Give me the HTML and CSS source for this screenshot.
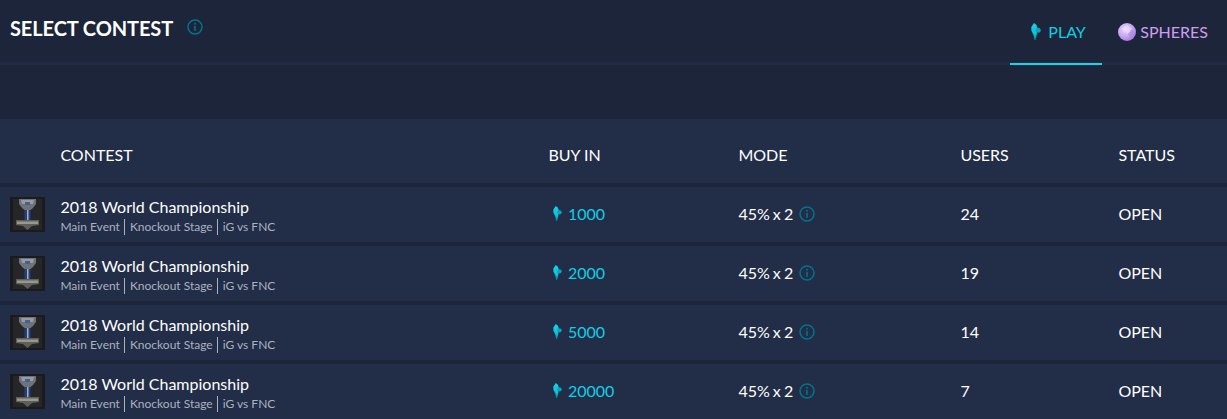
FILE: index.html
```html
<!DOCTYPE html>
<html>
    <head>
        <title>Select Contest</title>
        <link rel="stylesheet" href="styles.css">
    </head>
    <body>
        <svg class="defs" width="0" height="0">
            <defs>
                <linearGradient id="shardFill" x1="0" y1="0" x2="0" y2="1">
                    <stop offset="0" stop-color="#14d4ec" />
                    <stop offset="0.65" stop-color="#0cc0d8" />
                    <stop offset="1" stop-color="#067f94" />
                </linearGradient>
            </defs>
            <symbol id="shard" viewBox="0 0 10 17">
                <path d="M3 0 L5.5 2 L6.5 5 L5.5 6 L6 10 L5.5 13 L4.5 17 L3.5 17 L2.5 12 L0.3 7.5 L0.3 4 Z" fill="url(#shardFill)" />
                <circle cx="7.2" cy="7.2" r="2.5" fill="#0ba4bc" />
            </symbol>
            <symbol id="info" viewBox="0 0 16 16">
                <circle cx="8" cy="8" r="7" fill="none" stroke="currentColor" stroke-width="1.5" />
                <rect x="7.2" y="6.8" width="1.6" height="5" fill="currentColor" />
                <rect x="7.2" y="3.8" width="1.6" height="1.8" fill="currentColor" />
            </symbol>
            <symbol id="trophy" viewBox="0 0 35 35">
                <rect width="35" height="35" fill="#1b1b1d" />
                <rect x="3" y="2" width="29" height="31" fill="#262628" />
                <path d="M9 2 L26 2 L26 7 L23 11 L20.5 13 L14.5 13 L12 11 L9 7 Z" fill="#6f7277" />
                <path d="M11 3 L24 3 L23 7 L12 7 Z" fill="#989ba0" />
                <rect x="15" y="5" width="5" height="3" fill="#40619c" />
                <rect x="14.5" y="13" width="6" height="10" fill="#21407f" />
                <rect x="17" y="13" width="1.5" height="10" fill="#a9adb4" />
                <path d="M6 23 L29 23 L29 28 L22 29 L17.5 33 L13 29 L6 28 Z" fill="#5f5f5a" />
                <rect x="7" y="24.5" width="21" height="2.5" fill="#98988f" />
            </symbol>
        </svg>

        <div class="topBar">
            <div class="titleWrap">
                <h1 class="title">SELECT CONTEST</h1>
                <svg class="icon infoIcon titleInfo"><use href="#info" /></svg>
            </div>
            <div class="tabs">
                <div class="tab play active">
                    <svg class="shard"><use href="#shard" /></svg>
                    <span>PLAY</span>
                </div>
                <div class="tab spheres">
                    <svg class="sphere" viewBox="0 0 18 18">
                        <defs>
                            <radialGradient id="sphereFill" cx="40%" cy="35%" r="70%">
                                <stop offset="0" stop-color="#e8d8fb" />
                                <stop offset="0.6" stop-color="#c7a4f2" />
                                <stop offset="1" stop-color="#a478e0" />
                            </radialGradient>
                        </defs>
                        <circle cx="9" cy="9" r="9" fill="url(#sphereFill)" />
                        <path d="M3 6 L9 2 L14 6 L10 11 Z" fill="#efe4fc" opacity="0.6" />
                        <path d="M10 11 L14 6 L17 10 L13 16 Z" fill="#a87de2" opacity="0.5" />
                    </svg>
                    <span>SPHERES</span>
                </div>
            </div>
        </div>

        <div class="contests">
            <div class="row headRow">
                <div></div>
                <div>CONTEST</div>
                <div>BUY IN</div>
                <div>MODE</div>
                <div>USERS</div>
                <div>STATUS</div>
            </div>

            <div class="row contestRow">
                <svg class="thumb"><use href="#trophy" /></svg>
                <div class="info">
                    <div class="name">2018 World Championship</div>
                    <div class="meta"><span>Main Event</span><span>Knockout Stage</span><span>iG vs FNC</span></div>
                </div>
                <div class="value buyIn"><svg class="shard small"><use href="#shard" /></svg>1000</div>
                <div class="value mode">45% x 2 <svg class="icon infoIcon"><use href="#info" /></svg></div>
                <div class="value">24</div>
                <div class="value">OPEN</div>
            </div>

            <div class="row contestRow">
                <svg class="thumb"><use href="#trophy" /></svg>
                <div class="info">
                    <div class="name">2018 World Championship</div>
                    <div class="meta"><span>Main Event</span><span>Knockout Stage</span><span>iG vs FNC</span></div>
                </div>
                <div class="value buyIn"><svg class="shard small"><use href="#shard" /></svg>2000</div>
                <div class="value mode">45% x 2 <svg class="icon infoIcon"><use href="#info" /></svg></div>
                <div class="value">19</div>
                <div class="value">OPEN</div>
            </div>

            <div class="row contestRow">
                <svg class="thumb"><use href="#trophy" /></svg>
                <div class="info">
                    <div class="name">2018 World Championship</div>
                    <div class="meta"><span>Main Event</span><span>Knockout Stage</span><span>iG vs FNC</span></div>
                </div>
                <div class="value buyIn"><svg class="shard small"><use href="#shard" /></svg>5000</div>
                <div class="value mode">45% x 2 <svg class="icon infoIcon"><use href="#info" /></svg></div>
                <div class="value">14</div>
                <div class="value">OPEN</div>
            </div>

            <div class="row contestRow">
                <svg class="thumb"><use href="#trophy" /></svg>
                <div class="info">
                    <div class="name">2018 World Championship</div>
                    <div class="meta"><span>Main Event</span><span>Knockout Stage</span><span>iG vs FNC</span></div>
                </div>
                <div class="value buyIn"><svg class="shard small"><use href="#shard" /></svg>20000</div>
                <div class="value mode">45% x 2 <svg class="icon infoIcon"><use href="#info" /></svg></div>
                <div class="value">7</div>
                <div class="value">OPEN</div>
            </div>
        </div>
    </body>
</html>
```

FILE: styles.css
```css
html, body {
    margin: 0;
    height: 419px;
    overflow: hidden;
    background-color: #1c2539;
    font-family: Lato, "Open Sans", sans-serif;
    color: #fff;
}

.defs {
    display: block;
    height: 0;
}

.topBar {
    display: flex;
    justify-content: space-between;
    height: 62px;
    border-bottom: 3px solid #212b44;
}

.titleWrap {
    display: flex;
    align-items: flex-start;
    padding: 16px 0 0 10px;
}

.title {
    margin: 0;
    font-size: 20px;
    line-height: 24px;
    font-weight: bold;
    letter-spacing: -0.1px;
}

.icon {
    width: 16px;
    height: 16px;
}

.infoIcon {
    color: #05728a;
}

.titleInfo {
    margin: 3px 0 0 14px;
}

.tabs {
    display: flex;
    padding-right: 19px;
}

.tab {
    display: flex;
    align-items: center;
    box-sizing: border-box;
    height: 65px;
    font-size: 16px;
    padding-bottom: 2px;
}

.play {
    width: 92px;
    padding-left: 21px;
    color: #13cde6;
}

.active {
    border-bottom: 2px solid #13d6ec;
    padding-bottom: 0;
}

.spheres {
    margin-left: 16px;
    color: #cf9df0;
}

.shard {
    width: 10px;
    height: 17px;
    margin-right: 7px;
}

.shard.small {
    width: 9px;
    height: 15px;
    margin-right: 6px;
}

.sphere {
    width: 18px;
    height: 18px;
    margin-right: 4px;
}

.contests {
    margin-top: 54px;
}

.row {
    display: grid;
    grid-template-columns: 60.4px 488px 190px 222px 158px 1fr;
    align-items: center;
    background-color: #222d47;
    font-size: 16px;
}

.headRow {
    box-sizing: border-box;
    height: 64px;
    padding-top: 7px;
}

.contestRow {
    height: 55px;
    margin-top: 4px;
}

.thumb {
    width: 35px;
    height: 35px;
    margin-left: 10px;
}

.info {
    padding-top: 3px;
}

.name {
    line-height: 20px;
}

.meta {
    display: flex;
    margin-top: 2px;
    font-size: 12px;
    line-height: 16px;
    color: #aab2c0;
}

.meta span + span {
    margin-left: 4px;
    padding-left: 5px;
    border-left: 1px solid #aab2c0;
}

.value {
    padding-bottom: 2px;
}

.buyIn {
    display: flex;
    align-items: center;
    padding-left: 4.6px;
    color: #13cde6;
}

.mode {
    display: flex;
    align-items: center;
    gap: 6px;
    word-spacing: -1px;
}
```
